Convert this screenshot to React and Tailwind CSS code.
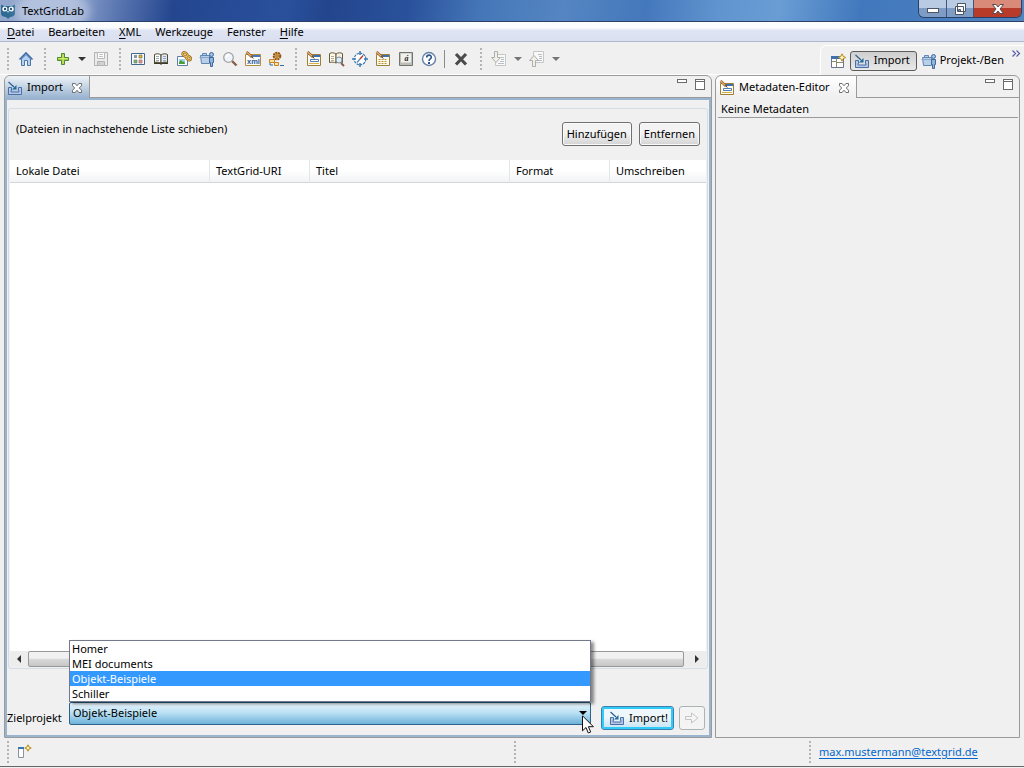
import React from "react";

function Icon({ children, className = "h-4 w-4" }) {
  return (
    <svg viewBox="0 0 16 16" className={"shrink-0 " + className} fill="none" aria-hidden="true">
      {children}
    </svg>
  );
}

const HomeIcon = () => (
  <Icon>
    <path d="M3.5 8v6.5h3v-5h3v5h3V8L8 3.5z" fill="#b4d2f0" stroke="#4a78ae" />
    <path d="M1.5 8.5 8 2l6.5 6.5" stroke="#3f6ea8" strokeWidth="1.6" />
  </Icon>
);

const PlusIcon = () => (
  <Icon>
    <path d="M6.5 2.5h3v4h4v3h-4v4h-3v-4h-4v-3h4z" fill="#a5d046" stroke="#4b8a35" />
    <path d="M8 3.5v9M3.5 7.5h9" stroke="#d8e96a" />
  </Icon>
);

const SaveIcon = () => (
  <Icon>
    <path d="M1.5 1.5h13v13h-13z" fill="#ececec" stroke="#b3b3b3" />
    <path d="M4.5 1.5h7v6h-7z" fill="#fff" stroke="#b9b9b9" />
    <path d="M4.5 10.5h7v4h-7z" fill="#d2d2d2" stroke="#b3b3b3" />
    <path d="M6 3.5h4M6 5.5h4M6.5 11.5v2" stroke="#c2c2c2" />
  </Icon>
);

const GridIcon = () => (
  <Icon>
    <path d="M1.5 2.5h13v11h-13z" fill="#f7faff" stroke="#41688c" />
    <path d="M4 4h3v3H4z" fill="#8d93a8" />
    <path d="M9 4h3v3H9z" fill="#e3b81e" stroke="#6a6a50" strokeWidth=".6" />
    <path d="M4 9h3v3H4z" fill="#7fb37c" stroke="#55805a" strokeWidth=".6" />
    <path d="M9 9h3v3H9z" fill="#e59a94" stroke="#94605c" strokeWidth=".6" />
  </Icon>
);

const BookIcon = () => (
  <Icon>
    <path d="M1 4v9h6l1 1 1-1h6V4z" fill="#3a3a2e" />
    <path d="M1.5 3.5c2-1 4.500-1 6.500.5v8c-2-1-4.500-1-6.500-.5z" fill="#fff" stroke="#50482f" />
    <path d="M14.500 3.500c-2-1-4.500-1-6.500.5v8c2-1 4.500-1 6.500-.5z" fill="#dce9f6" stroke="#50482f" />
    <path d="M3 5.500h3M3 7.500h3M3 9.500h3M10 5.500h3M10 7.500h3M10 9.500h3" stroke="#98a6b8" />
  </Icon>
);

const PictureLinkIcon = () => (
  <Icon>
    <path d="M1.5 5.5h8l2 2v7h-10z" fill="#fff" stroke="#5d7fa8" />
    <path d="M3 8h6v5H3z" fill="#9fd3f2" />
    <path d="M3 13v-2l2-2 2 2 1-1 1 3z" fill="#46a03a" />
    <g stroke="#97671a" strokeWidth="2.400">
      <ellipse cx="9" cy="3.500" rx="2.600" ry="1.700" transform="rotate(35 9 3.500)" />
      <ellipse cx="12.500" cy="7" rx="2.600" ry="1.700" transform="rotate(35 12.500 7)" />
    </g>
    <g stroke="#efc35a">
      <ellipse cx="9" cy="3.500" rx="2.600" ry="1.700" transform="rotate(35 9 3.500)" />
      <ellipse cx="12.500" cy="7" rx="2.600" ry="1.700" transform="rotate(35 12.500 7)" />
    </g>
  </Icon>
);

const ProjectIcon = () => (
  <Icon>
    <path d="M3.5 4.5v-2h4v2M1.5 4.5h9v8h-8z" fill="#b8cfe8" stroke="#5f86b4" />
    <path d="M.5 6.5h9.500" stroke="#86a6cc" />
    <circle cx="12.500" cy="3.500" r="2" fill="#9fc0e4" stroke="#41699c" />
    <path d="M10.500 6.500h4v5h-1v4h-2v-4h-1z" fill="#8fb5df" stroke="#41699c" />
  </Icon>
);

const SearchIcon = () => (
  <Icon>
    <path d="m10 10 4.500 4.500" stroke="#8a5f46" strokeWidth="2.400" />
    <circle cx="6.500" cy="6.500" r="4.800" fill="#eef5fb" stroke="#a3a3a3" strokeWidth="1.300" />
    <path d="M4 6c.4-1.600 1.400-2.200 3-2.400" stroke="#fff" strokeWidth="1.500" />
  </Icon>
);

const Pencil = () => (
  <g>
    <path d="m1.500 1 5.500 5" stroke="#8f5b27" strokeWidth="2.600" />
    <path d="m1.500 1 4.800 4.300" stroke="#e9b878" strokeWidth="1.100" />
    <path d="m6.500 5.500 1.800 2" stroke="#4b3420" />
  </g>
);

const XmlIcon = () => (
  <Icon>
    <path d="M.5 3.500h15v11H.5z" fill="#fff" stroke="#b08c3c" />
    <path d="M5 4h10v2H5z" fill="#4478bd" />
    <text x="2" y="13" fontSize="7.500" fontWeight="700" fill="#2c5494" fontFamily="Liberation Sans, sans-serif">xml</text>
    <Pencil />
  </Icon>
);

const WorkflowIcon = () => (
  <Icon>
    <circle cx="9" cy="5" r="3.300" fill="#e9b957" stroke="#8c5212" strokeWidth="2" strokeDasharray="2 .7" />
    <circle cx="9" cy="5" r="1.200" fill="#fff" stroke="#8c5212" />
    <path d="M1.500 8.500h5v3h-5zM6.500 11.500h4v3h-4z" fill="#ffe2a0" stroke="#c08528" />
    <path d="M2 12v2h3M12 14.500h4" stroke="#2f6da4" />
  </Icon>
);

const EditorIcon = ({ dotted }) => (
  <Icon>
    <path d="M1.500 3.500h13v11h-13z" fill="#fffdf2" stroke="#9c8038" />
    <path d="M6 4h8v2H6z" fill="#3d6fb3" />
    {dotted ? (
      <path d="M3.500 8.500h9M3.500 10.500h9M3.500 12.500h9" stroke="#b98f34" strokeDasharray="2 1" />
    ) : (
      <g>
        <path d="M4.500 8.500h8v2h-8z" fill="#fff" stroke="#4f7db4" />
        <path d="M3 12.500h10" stroke="#d8b044" />
      </g>
    )}
    <Pencil />
  </Icon>
);

const BookSearchIcon = () => (
  <Icon>
    <path d="M.5 2.500c2-1 4.500-1 6.500.5v9c-2-1-4.500-1-6.500-.5z" fill="#fffbe8" stroke="#6a5a38" />
    <path d="M13.500 2.500c-2-1-4.500-1-6.500.5v9c2-1 4.500-1 6.500-.5z" fill="#f3f1e4" stroke="#6a5a38" />
    <path d="M2 5.500h3M2 7.500h3M2 9.500h3" stroke="#a9a9a0" />
    <path d="m12 12 3 3" stroke="#8a5f46" strokeWidth="2" />
    <circle cx="10" cy="9" r="3" fill="#dcecf8" stroke="#7d8c9c" />
  </Icon>
);

const CompassIcon = () => (
  <Icon>
    <circle cx="8" cy="8" r="5.800" fill="#fff" stroke="#3c7cae" strokeWidth="1.200" strokeDasharray="2.500 .8" />
    <path d="M8 0v4M8 12v4M0 8h4M12 8h4" stroke="#3c7cae" strokeWidth="1.500" />
    <path d="m8 8 3-3.500" stroke="#c8352c" strokeWidth="1.400" />
    <path d="m8 8-3 3.500" stroke="#5b86b4" strokeWidth="1.300" />
  </Icon>
);

const KeyIcon = () => (
  <Icon>
    <path d="M1.500 1.500h13v13h-13z" fill="#bdbdb8" stroke="#74746c" />
    <path d="M3 2.500h10v9H3z" fill="#f0f0ec" />
    <text x="6.500" y="9.500" fontSize="8" fontWeight="700" fontStyle="italic" fill="#222" fontFamily="Liberation Serif, serif">á</text>
  </Icon>
);

const HelpIcon = () => (
  <Icon>
    <circle cx="8" cy="8" r="6.500" fill="#fff" stroke="#6482a8" strokeWidth="1.400" />
    <path d="M5.700 6.500C5.700 3.300 10.300 3.500 10.300 6.200 10.300 8 8 7.800 8 10" stroke="#2f5688" strokeWidth="1.600" />
    <path d="M7 11h2v2H7z" fill="#2f5688" />
  </Icon>
);

const DeleteIcon = () => (
  <Icon>
    <path d="m3 3 10 10.500M13 3 3 13.500" stroke="#4b4b4b" strokeWidth="3.200" />
  </Icon>
);

const SheetArrowIcon = ({ up }) => (
  <Icon>
    <path d={up ? "M4.500.5h10v11h-10z" : "M4.500 3.500h10v11h-10z"} fill="#f9f9f9" stroke="#c6c6c6" />
    <path d={up ? "M9 3.500h4M10 5.500h3M10 7.500h3M9 9.500h4" : "M10 6.500h3M10 8.500h3M9 10.500h4M7 12.500h6"} stroke="#b9bfc6" />
    <path
      d={up ? "M3.500 15.500v-6h-3l4.500-5 4.500 5h-3v6z" : "M3.500.5v6h-3l4.500 5 4.500-5h-3v-6z"}
      fill="#f0efea"
      stroke="#b0aea6"
    />
  </Icon>
);

const ImportIcon = () => (
  <Icon>
    <path d="M1.500 7.500h3v3h-.5v1.500h8v-1.500h-.5v-3h3v7h-13z" fill="#b4c9e6" stroke="#4c6ea6" />
    <path d="m1.500 2 5.500 5" stroke="#2b608c" strokeWidth="1.200" />
    <path d="M9.500 5v4.500H5z" fill="#1f6a98" />
  </Icon>
);

const PerspectiveIcon = () => (
  <Icon>
    <path d="M1.500 3.500h12v11h-12z" fill="#fff" stroke="#68758c" />
    <path d="M1 3h9v3H1z" fill="#3f72ad" />
    <path d="M6.500 6v8M7 9.500h6M2 8.500h4" stroke="#8d8a72" />
    <path d="m12 .8 1.200 2.500 2.500 1.200-2.500 1.200L12 8.200l-1.200-2.500-2.500-1.200 2.500-1.200z" fill="#fff1b5" stroke="#b58a1e" />
  </Icon>
);

const FastViewIcon = () => (
  <Icon>
    <path d="M2.500 3.500h5v10h-5z" fill="#fff" stroke="#8c93a0" />
    <path d="M2 3h6v2H2z" fill="#3876b8" />
    <path d="m12 .8 1 2.200 2.200 1-2.200 1-1 2.200-1-2.200-2.200-1 2.200-1z" fill="#fff1b5" stroke="#b58a1e" />
  </Icon>
);

const ForwardIcon = () => (
  <Icon>
    <path d="M1.500 6.500h6v-3.500l6.500 5-6.500 5V9.500h-6z" fill="#f6f6f6" stroke="#c4c4c4" />
  </Icon>
);

const CloseTabIcon = () => (
  <Icon className="h-3 w-3">
    <path
      d="M2 2h3.500L8 5l2.500-3H14v3l-3 3 3 3v3h-3.500L8 11l-2.500 3H2v-3l3-3-3-3z"
      fill="#fdfdfd"
      stroke="#6b6b6b"
      strokeWidth="1.300"
    />
  </Icon>
);

const OwlIcon = () => (
  <Icon>
    <path d="M1 1.500 4 3h8l3-1.500v9C15 13 12 14 10 14l-2 2-2-2c-2 0-5-1-5-3.500z" fill="#2e6a92" />
    <circle cx="4.800" cy="6" r="2.500" fill="#fff" />
    <circle cx="11.200" cy="6" r="2.500" fill="#fff" />
    <circle cx="5" cy="6" r="1.200" fill="#23516f" />
    <circle cx="11" cy="6" r="1.200" fill="#23516f" />
    <path d="m7 8 1 2 1-2z" fill="#dfe8ee" />
  </Icon>
);

function Caret({ label, className = "text-[#333]" }) {
  return (
    <button aria-label={label} className={"flex h-6 w-[15px] items-center justify-center " + className}>
      <svg viewBox="0 0 8 4" className="h-1 w-2" aria-hidden="true">
        <path d="M0 0h8L4 4z" fill="currentColor" />
      </svg>
    </button>
  );
}

function Grip({ className = "w-[14px]" }) {
  return (
    <span className={"flex h-6 shrink-0 items-center justify-center pl-0.5 " + className} aria-hidden="true">
      <svg viewBox="0 0 2 22" className="h-[22px] w-0.5">
        <path d="M1 0v22" stroke="#b4b4b4" strokeWidth="2" strokeDasharray="2 2" />
      </svg>
    </span>
  );
}

function Tool({ label, disabled, children }) {
  return (
    <button aria-label={label} title={label} disabled={disabled} className="flex h-6 w-[23px] items-center justify-center">
      {children}
    </button>
  );
}

function WindowGlyphs() {
  return (
    <div className="flex items-start gap-2 pt-[3px] pr-[6px]">
      <button aria-label="Minimieren" className="flex h-3 w-[10px] items-start">
        <span className="h-1 w-full border border-[#6b6b6b] bg-white" />
      </button>
      <button aria-label="Maximieren" className="flex h-3 w-[10px] items-start">
        <span className="h-[11px] w-full border border-[#6b6b6b] bg-white pt-px">
          <span className="block h-px bg-[#6b6b6b]" />
        </span>
      </button>
    </div>
  );
}

const menus = [
  ["D", "atei"],
  ["", "Bearbeiten"],
  ["X", "ML"],
  ["", "Werkzeuge"],
  ["", "Fenster"],
  ["H", "ilfe"],
];
const projects = ["Homer", "MEI documents", "Objekt-Beispiele", "Schiller"];
const columns = ["Lokale Datei", "TextGrid-URI", "Titel", "Format", "Umschreiben"];

function TitleBar() {
  return (
    <header className="flex h-[22px] items-start justify-between overflow-hidden border-b border-[#2c3f66] bg-[linear-gradient(100deg,#93a7cd_0%,#8fa5cf_7%,#5672ae_12%,#24468f_17%,#2a509c_28%,#23458d_32%,#2a529c_40%,#4577b8_47%,#5585c2_55%,#4478bc_63%,#5f94cf_70%,#6a9dd4_76%,#4178bd_84%,#5084bf_100%)]">
      <div className="flex items-center gap-[6px] pt-0.5">
        <OwlIcon />
        <h1 className="rounded-full bg-white/30 text-[11px] leading-[18px] shadow-[0_0_10px_6px_rgba(255,255,255,0.35)]">TextGridLab</h1>
      </div>
      <div className="mr-0.5 flex h-[18px] overflow-hidden rounded-b-md border border-t-0 border-[#27406b]">
        <button aria-label="Fenster minimieren" className="flex w-7 items-center justify-center border-r border-[#3d5680] bg-linear-to-b from-[#b9cbe2] from-50% to-[#7f9cc4] to-50%">
          <span className="mt-1 h-[5px] w-3 border border-[#4c5564] bg-white" />
        </button>
        <button aria-label="Fenster wiederherstellen" className="flex w-[27px] items-center justify-center border-r border-[#3d5680] bg-linear-to-b from-[#b9cbe2] from-50% to-[#7f9cc4] to-50%">
          <svg viewBox="0 0 13 12" className="h-3 w-[13px]" aria-hidden="true">
            <path d="M3.500.5h8v8h-8zM1.500 3.500h8v8h-8z" fill="#fff" stroke="#4c5564" />
            <path d="M4.500 6.500h2v2h-2z" fill="#7f9cc4" stroke="#4c5564" />
          </svg>
        </button>
        <button aria-label="Fenster schließen" className="flex w-[47px] items-center justify-center bg-linear-to-b from-[#d98a78] from-50% to-[#b83a28] to-50%">
          <svg viewBox="0 0 12 10" className="h-[10px] w-3" aria-hidden="true">
            <path d="M.5.5h3.500l2 2.500 2-2.500h3.500L8 5l3.500 4.500H8L6 7 4 9.500H.5L4 5z" fill="#fff" stroke="#5a4a50" />
          </svg>
        </button>
      </div>
    </header>
  );
}

function MenuBar() {
  return (
    <nav className="flex h-5 items-center border-b border-[#b3b6cf] bg-linear-to-b from-[#fbfcfe] from-30% via-[#dfe4f3] via-45% to-[#dbe0f1]">
      {menus.map(([key, rest]) => (
        <button key={rest} className="px-[7px] leading-4">
          {key && <span className="underline underline-offset-2">{key}</span>}
          {rest}
        </button>
      ))}
    </nav>
  );
}

function ToolBar() {
  return (
    <div className="flex h-[33px]">
      <div role="toolbar" className="flex min-w-0 flex-1 items-center border-b border-white pt-0.5">
        <Grip />
        <Tool label="Startseite"><HomeIcon /></Tool>
        <Grip />
        <Tool label="Neu"><PlusIcon /></Tool>
        <Caret label="Neu Optionen" />
        <Tool label="Speichern" disabled><SaveIcon /></Tool>
        <Grip />
        <Tool label="Übersicht"><GridIcon /></Tool>
        <Tool label="Wörterbuch"><BookIcon /></Tool>
        <Tool label="Text-Bild-Link"><PictureLinkIcon /></Tool>
        <Tool label="Projekte"><ProjectIcon /></Tool>
        <Tool label="Suche"><SearchIcon /></Tool>
        <Tool label="XML-Editor"><XmlIcon /></Tool>
        <Tool label="Workflow"><WorkflowIcon /></Tool>
        <Grip className="w-[15px]" />
        <Tool label="Metadaten"><EditorIcon /></Tool>
        <Tool label="Wörterbuchsuche"><BookSearchIcon /></Tool>
        <Tool label="Navigator"><CompassIcon /></Tool>
        <Tool label="Vorlagen"><EditorIcon dotted /></Tool>
        <Tool label="Zeichentabelle"><KeyIcon /></Tool>
        <Tool label="Hilfe"><HelpIcon /></Tool>
        <span className="mx-1 h-[18px] w-px bg-[#8b8b8b]" />
        <Tool label="Löschen"><DeleteIcon /></Tool>
        <Grip className="w-[15px]" />
        <Tool label="Importieren" disabled><SheetArrowIcon /></Tool>
        <Caret label="Import Optionen" className="text-[#757575]" />
        <Tool label="Exportieren" disabled><SheetArrowIcon up /></Tool>
        <Caret label="Export Optionen" className="text-[#757575]" />
      </div>
      <div className="mt-[3px] flex items-center rounded-tl-md border-t border-l border-white pr-[3px] pl-[9px]">
        <button aria-label="Perspektive öffnen" className="w-5"><PerspectiveIcon /></button>
        <button className="flex h-5 items-center gap-1 rounded-[3px] border border-[#5c5c5c] bg-linear-to-b from-[#cfcfcf] to-[#e9e9e9] pr-[6px] pl-[3px]">
          <ImportIcon />
          Import
        </button>
        <button className="flex items-center gap-[3px] pl-1 whitespace-nowrap">
          <ProjectIcon />
          Projekt-/Ben
        </button>
        <button aria-label="Weitere Perspektiven" className="ml-2 self-start pt-1">
          <svg viewBox="0 0 9 7" className="h-[7px] w-[9px]" fill="none" aria-hidden="true">
            <path d="m.5.5 3 3-3 3m4-6 3 3-3 3" stroke="#5c5ca8" strokeWidth="1.200" />
          </svg>
        </button>
      </div>
    </div>
  );
}

function ImportView() {
  return (
    <section className="flex min-h-0 flex-col rounded-t-md border border-[#9a9a9a]">
      <div className="flex h-[22px] justify-between border-b border-[#9a9a9a]">
        <div className="-mb-px flex items-center gap-1 rounded-tl-md border-r border-[#9a9a9a] bg-linear-to-b from-[#eef3f8] to-[#99b4d1] pt-px pr-1.5 pl-0.5">
          <ImportIcon />
          <h2>Import</h2>
          <button aria-label="Import schließen" className="ml-1"><CloseTabIcon /></button>
        </div>
        <WindowGlyphs />
      </div>
      <div className="flex min-h-0 flex-1 flex-col border-2 border-[#99b4d1] pt-2">
        <div className="mx-px flex min-h-0 flex-1 flex-col rounded-[3px] border border-[#d3dde8] p-px">
          <div className="flex h-[50px] items-start justify-between pr-[6px] pl-[6px]">
            <p className="pt-[11px] leading-4">(Dateien in nachstehende Liste schieben)</p>
            <div className="flex gap-[7px] pt-3">
              <button className="h-6 rounded-[3px] border border-[#707070] bg-linear-to-b from-[#f3f3f3] from-45% to-[#d3d3d3] px-1 shadow-[inset_0_0_0_1px_#fafafa]">Hinzufügen</button>
              <button className="h-6 rounded-[3px] border border-[#707070] bg-linear-to-b from-[#f3f3f3] from-45% to-[#d3d3d3] px-1 shadow-[inset_0_0_0_1px_#fafafa]">Entfernen</button>
            </div>
          </div>
          <div className="min-h-0 flex-1 bg-white">
            <table className="w-full table-fixed border-separate border-spacing-0">
              <colgroup>
                <col className="w-[200px]" />
                <col className="w-[100px]" />
                <col className="w-[200px]" />
                <col className="w-[100px]" />
                <col />
              </colgroup>
              <thead>
                <tr>
                  {columns.map((c) => (
                    <th key={c} className="h-[23px] border-r border-b border-r-[#e2e5ea] border-b-[#d5d5d5] bg-linear-to-b from-white from-45% to-[#f2f3f5] pl-[6px] text-left font-normal last:border-r-0">{c}</th>
                  ))}
                </tr>
              </thead>
              <tbody />
            </table>
          </div>
          <div className="flex h-4 items-stretch bg-[#ededed]">
            <button aria-label="Nach links" className="flex w-[18px] items-center justify-center">
              <svg viewBox="0 0 4 8" className="h-2 w-1" aria-hidden="true"><path d="M4 0v8L0 4z" fill="#333" /></svg>
            </button>
            <div className="flex-1 rounded-[2px] border border-[#989898] bg-linear-to-b from-[#f1f1f1] from-45% via-[#d9d9d9] via-50% to-[#c6c6c6]" />
            <button aria-label="Nach rechts" className="ml-1 flex w-[18px] items-center justify-center">
              <svg viewBox="0 0 4 8" className="h-2 w-1" aria-hidden="true"><path d="M0 0v8l4-4z" fill="#333" /></svg>
            </button>
          </div>
        </div>
        <div className="flex items-start pt-[33px] pr-1 pb-[5px]">
          <label htmlFor="target" className="w-[62px] pt-2 leading-4">Zielprojekt</label>
          <div className="relative min-w-0 flex-1">
            <select
              id="target"
              defaultValue="Objekt-Beispiele"
              className="block h-[23px] w-full appearance-none rounded-[2px] border border-[#2c628b] bg-linear-to-b from-[#e3f2fb] from-10% via-[#b4def2] via-50% to-[#6fb1d8] pl-[3px]"
            >
              {projects.map((p) => (
                <option key={p}>{p}</option>
              ))}
            </select>
            <svg viewBox="0 0 8 4" className="pointer-events-none absolute top-[9px] right-1 h-1 w-2" aria-hidden="true">
              <path d="M0 0h8L4 4z" fill="#000" />
            </svg>
            <ul role="listbox" aria-label="Zielprojekt" className="absolute inset-x-0 bottom-full z-10 border border-[#73788a] bg-white shadow-[3px_2px_3px_rgba(0,0,0,0.45)]">
              {projects.map((p) => (
                <li
                  key={p}
                  role="option"
                  aria-selected={p === "Objekt-Beispiele"}
                  className="pl-0.5 leading-[15px] aria-selected:bg-[#3399ff] aria-selected:text-white"
                >
                  {p}
                </li>
              ))}
            </ul>
            <svg viewBox="0 0 12 19" className="pointer-events-none absolute top-[13px] -right-[3px] z-20 h-[19px] w-3" aria-hidden="true">
              <path d="M.5.8v15l3.500-3.300 2.300 5.500 2.400-1-2.300-5.300h5z" fill="#fff" stroke="#111" />
            </svg>
          </div>
          <button className="mt-1 ml-[10px] flex h-6 items-center gap-1 rounded-[3px] border border-[#3c7fb1] bg-linear-to-b from-[#eef7fc] from-45% to-[#c4e2f3] pr-[5px] pl-[7px] shadow-[inset_0_0_0_2px_#30ccf8]">
            <ImportIcon />
            Import!
          </button>
          <button aria-label="Weiter" disabled className="mt-1 ml-[5px] flex h-6 w-[26px] items-center justify-center rounded-[3px] border border-[#adb2b5] bg-[#f4f4f4]">
            <ForwardIcon />
          </button>
        </div>
      </div>
    </section>
  );
}

function MetadataView() {
  return (
    <section className="flex min-h-0 flex-col rounded-t-md border border-[#9a9a9a]">
      <div className="flex h-[22px] justify-between border-b border-[#9a9a9a]">
        <div className="-mb-px flex items-center gap-1 rounded-tl-md border-r border-[#9a9a9a] bg-linear-to-b from-white to-[#efefef] pt-px pr-1.5 pl-[3px]">
          <EditorIcon />
          <h2>Metadaten-Editor</h2>
          <button aria-label="Metadaten-Editor schließen" className="ml-1"><CloseTabIcon /></button>
        </div>
        <WindowGlyphs />
      </div>
      <p className="mr-px ml-0.5 border-b border-[#9a9a9a] pt-[3px] pl-[3px] leading-4">Keine Metadaten</p>
    </section>
  );
}

function StatusBar() {
  return (
    <footer className="flex h-[29px] items-center border-b border-[#666]">
      <div className="flex flex-1 items-center">
        <Grip />
        <button aria-label="Schnellansicht" className="ml-0.5"><FastViewIcon /></button>
      </div>
      <div className="w-[294px]"><Grip className="w-2" /></div>
      <Grip className="w-[9px]" />
      <div className="w-[211px] pl-[6px]">
        <a href="mailto:max.mustermann@textgrid.de" className="text-[#0066cc] underline underline-offset-2">max.mustermann@textgrid.de</a>
      </div>
    </footer>
  );
}

export default function App() {
  return (
    <div className="flex min-h-screen flex-col bg-[#f0f0f0] pb-px font-['Noto_Sans','Open_Sans',sans-serif] text-[11px] text-black">
      <TitleBar />
      <MenuBar />
      <ToolBar />
      <main className="grid flex-1 grid-cols-[minmax(0,708fr)_minmax(0,305fr)] gap-[3px] px-1">
        <ImportView />
        <MetadataView />
      </main>
      <StatusBar />
    </div>
  );
}
